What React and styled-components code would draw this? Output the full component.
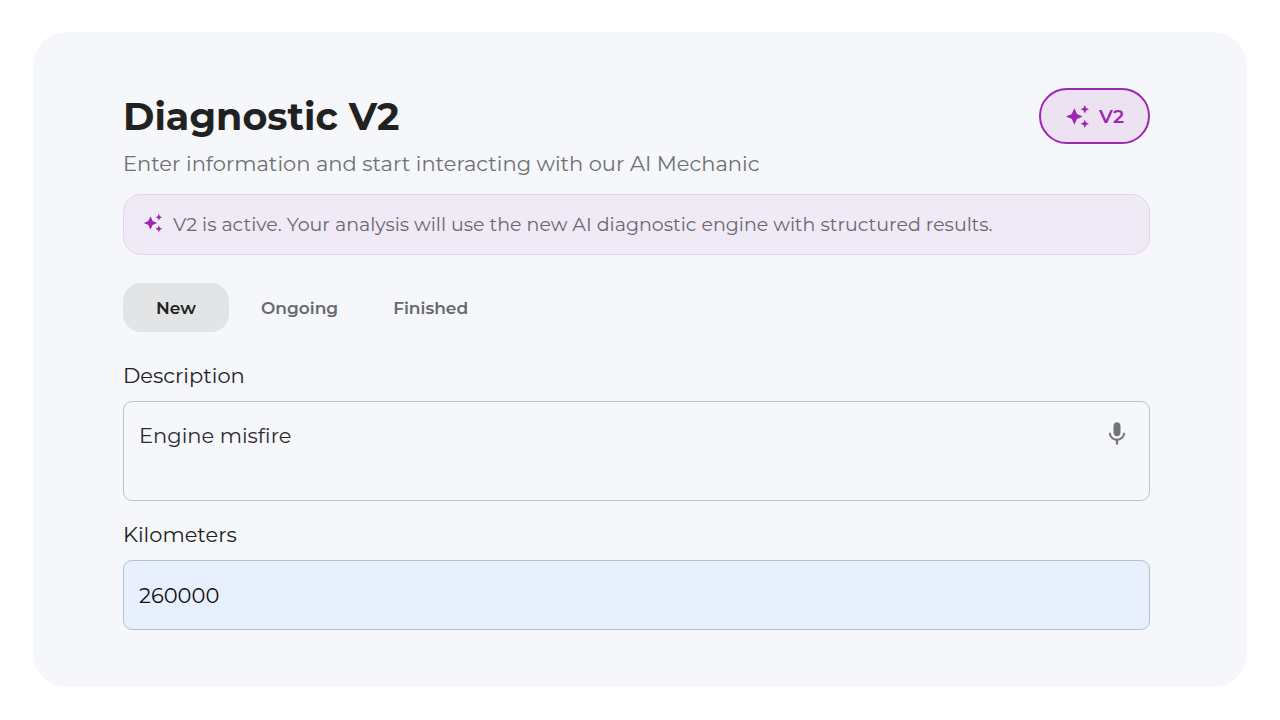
import React, { useState } from 'react';
import styled, { createGlobalStyle } from 'styled-components';

const GlobalStyle = createGlobalStyle`
  *, *::before, *::after { box-sizing: border-box; }
  body {
    margin: 0;
    background: #ffffff;
    color: #212121;
    font-family: Montserrat, Inter, "Liberation Sans", sans-serif;
  }
  button, input, textarea { font-family: inherit; }
`;

const Page = styled.div`
  padding: 32px 33px;
`;

const Card = styled.main`
  padding: 41px 97px 57px 90px;
  border-radius: 34px;
  background: #f5f7fb;
`;

const Hairline = styled.div`
  height: 3px;
  margin-bottom: 12px;
  background: linear-gradient(90deg, transparent, #f5f6fa 5%, #f5f6fa 95%, transparent);
`;

const Header = styled.header`
  display: flex;
  align-items: center;
  justify-content: space-between;
`;

const Title = styled.h1`
  margin: 0;
  padding-top: 2px;
  font-size: 38px;
  font-weight: 700;
  line-height: 54px;
`;

const VersionButton = styled.button`
  display: flex;
  align-items: center;
  gap: 9px;
  height: 56px;
  padding: 0 24px;
  border: 2px solid #9c27b0;
  border-radius: 28px;
  background: #ede2f2;
  color: #9c27b0;
  font-size: 19px;
  font-weight: 600;
`;

const Subtitle = styled.p`
  margin: 4px 0 14px;
  color: #6e7073;
  font-size: 21px;
  font-weight: 400;
  line-height: 32px;
`;

const Notice = styled.div`
  display: flex;
  align-items: center;
  gap: 10px;
  min-height: 61px;
  padding: 0 19px;
  border: 1px solid #e6d3ee;
  border-radius: 18px;
  background: #f0eaf6;
  color: #6a686e;
  font-size: 19px;
  line-height: 28px;

  svg { color: #9c27b0; margin-bottom: 4px; }
`;

const Tabs = styled.div`
  display: flex;
  gap: 9px;
  margin: 28px 0;
`;

const Tab = styled.button`
  height: 49px;
  min-width: 106px;
  padding: 0 23px;
  border: 0;
  border-radius: 18px;
  background: ${({ $active }) => ($active ? '#e2e4e6' : 'transparent')};
  color: ${({ $active }) => ($active ? '#212121' : '#67696c')};
  font-size: 17px;
  font-weight: 600;
`;

const Label = styled.label`
  display: block;
  margin-bottom: 9px;
  font-size: 21px;
  line-height: 32px;
`;

const DescriptionBox = styled.div`
  display: flex;
  align-items: flex-start;
  min-height: 100px;
  margin-bottom: 18px;
  padding: 18px 18px 16px 15px;
  border: 1px solid #c0c2c6;
  border-radius: 9px;
`;

const DescriptionInput = styled.textarea`
  flex: 1;
  height: 64px;
  padding: 0;
  border: 0;
  outline: 0;
  resize: none;
  background: transparent;
  color: #2b2b2d;
  font-size: 21px;
  line-height: 32px;
`;

const MicButton = styled.button`
  display: flex;
  padding: 0;
  border: 0;
  background: transparent;
  color: #737477;
`;

const KilometersInput = styled.input`
  display: block;
  width: 100%;
  height: 70px;
  padding: 0 15px;
  border: 1px solid #b8bfce;
  border-radius: 9px;
  background: #e8f0fe;
  color: #101114;
  font-size: 21px;
`;

function Sparkles({ size }) {
  return (
    <svg width={size} height={size} viewBox="0 0 24 24" fill="currentColor" aria-hidden="true">
      <path d="m19 9 1.25-2.75L23 5l-2.75-1.25L19 1l-1.25 2.75L15 5l2.75 1.25L19 9zm-7.5.5L9 4 6.5 9.5 1 12l5.5 2.5L9 20l2.5-5.5L17 12l-5.5-2.5zM19 15l-1.25 2.75L15 19l2.75 1.25L19 23l1.25-2.75L23 19l-2.75-1.25L19 15z" />
    </svg>
  );
}

function Mic() {
  return (
    <svg width="28" height="28" viewBox="0 0 24 24" fill="currentColor" aria-hidden="true">
      <path d="M12 14c1.66 0 2.99-1.34 2.99-3L15 5c0-1.66-1.34-3-3-3S9 3.34 9 5v6c0 1.66 1.34 3 3 3zm5.3-3c0 3-2.54 5.1-5.3 5.1S6.7 14 6.7 11H5c0 3.41 2.72 6.23 6 6.72V21h2v-3.28c3.28-.48 6-3.3 6-6.72h-1.7z" />
    </svg>
  );
}

const tabNames = ['New', 'Ongoing', 'Finished'];

export default function App() {
  const [tab, setTab] = useState('New');
  return (
    <>
      <GlobalStyle />
      <Page>
        <Card>
          <Hairline />
          <Header>
            <Title>Diagnostic V2</Title>
            <VersionButton type="button">
              <Sparkles size={25} />
              V2
            </VersionButton>
          </Header>
          <Subtitle>Enter information and start interacting with our AI Mechanic</Subtitle>
          <Notice>
            <Sparkles size={20} />
            <span>V2 is active. Your analysis will use the new AI diagnostic engine with structured results.</span>
          </Notice>
          <Tabs role="tablist">
            {tabNames.map((name) => (
              <Tab
                key={name}
                type="button"
                role="tab"
                aria-selected={tab === name}
                $active={tab === name}
                onClick={() => setTab(name)}
              >
                {name}
              </Tab>
            ))}
          </Tabs>
          <Label htmlFor="description">Description</Label>
          <DescriptionBox>
            <DescriptionInput id="description" defaultValue="Engine misfire" />
            <MicButton type="button" aria-label="Dictate description">
              <Mic />
            </MicButton>
          </DescriptionBox>
          <Label htmlFor="kilometers">Kilometers</Label>
          <KilometersInput id="kilometers" inputMode="numeric" defaultValue="260000" />
        </Card>
      </Page>
    </>
  );
}
